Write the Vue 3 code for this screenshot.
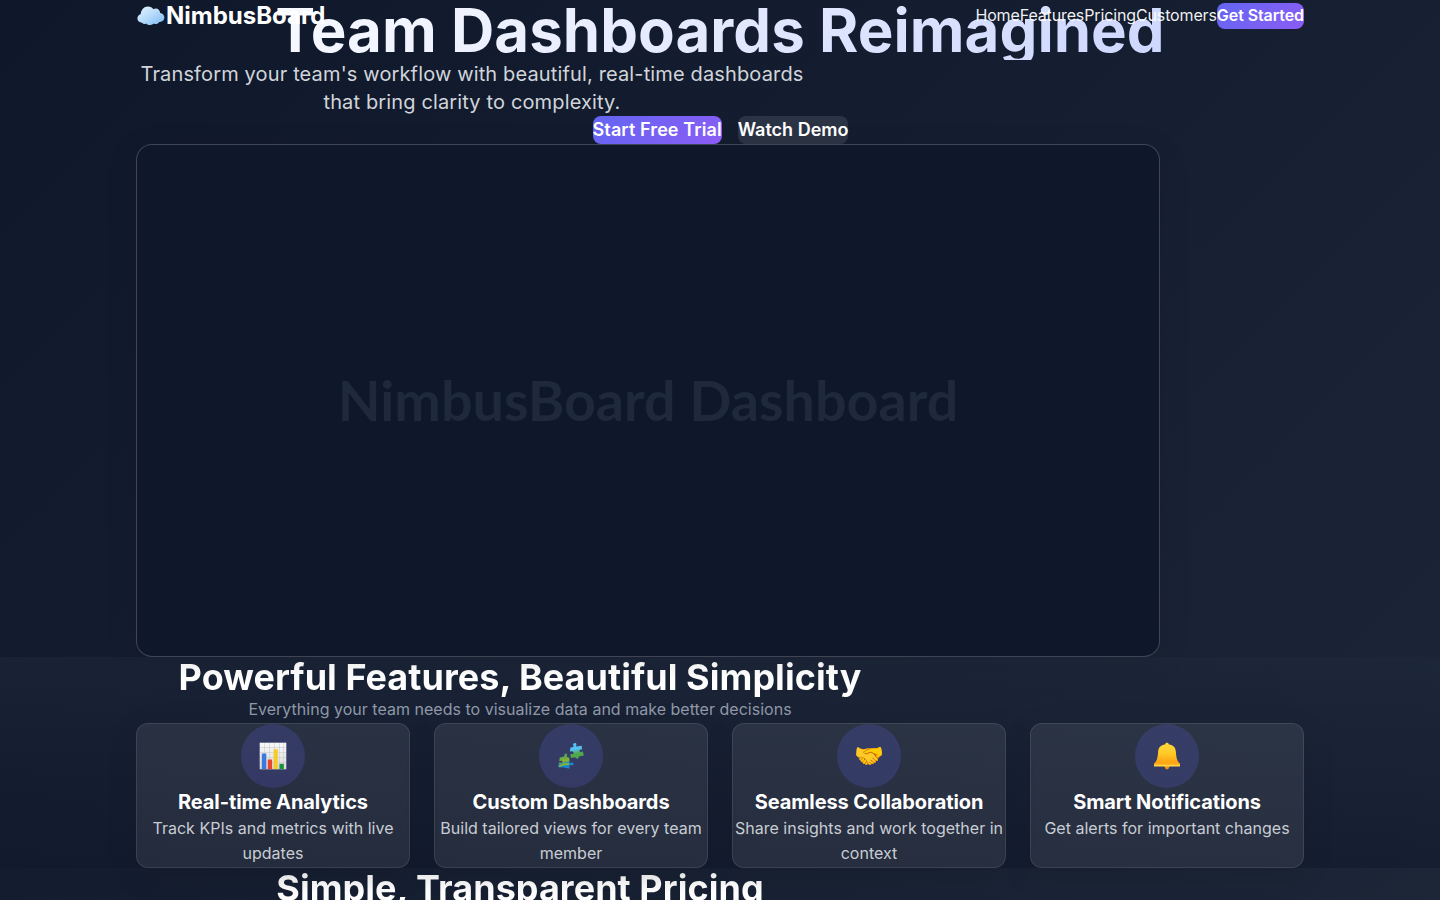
<script setup>
const links = ['Home', 'Features', 'Pricing', 'Customers']
const features = [
  { icon: 'chart', title: 'Real-time Analytics', text: 'Track KPIs and metrics with live updates' },
  { icon: 'puzzle', title: 'Custom Dashboards', text: 'Build tailored views for every team member' },
  { icon: 'hands', title: 'Seamless Collaboration', text: 'Share insights and work together in context' },
  { icon: 'bell', title: 'Smart Notifications', text: 'Get alerts for important changes' },
]
</script>

<template>
  <div class="page">
    <header class="nav">
      <div class="container nav-row">
        <div class="logo">
          <svg width="30" height="32" viewBox="0 0 30 32">
            <defs>
              <linearGradient id="cloud" x1="0" y1="0" x2="1" y2="1">
                <stop offset="0" stop-color="#e6f3fd" />
                <stop offset=".5" stop-color="#b5dafa" />
                <stop offset="1" stop-color="#7cb9f2" />
              </linearGradient>
            </defs>
            <path fill="url(#cloud)" d="M6 22.8C3.500 22.800 1.400 20.900 1.400 18.600C1.400 16.500 2.700 14.700 4.800 14.100C4.800 10 8 6.500 12 6.500C14.500 6.500 16.200 7.500 17.300 9.200C20.500 7.400 24 9.400 24.200 13C26.600 13.300 28.400 15.200 28.400 17.600C28.400 20.400 26 22.300 23.200 22C22 24 19.700 24.600 17.800 23.500C15.500 25.500 12 25.500 10.200 23.400C9 24.500 7.200 24.300 6 22.800Z" />
          </svg>
          <span>NimbusBoard</span>
        </div>
        <nav class="links">
          <a v-for="link in links" :key="link">{{ link }}</a>
          <button class="btn primary small">Get Started</button>
        </nav>
      </div>
    </header>

    <section class="hero">
      <div class="container">
        <h1>Team Dashboards Reimagined</h1>
        <p class="lead">Transform your team's workflow with beautiful, real-time dashboards that bring clarity to complexity.</p>
        <div class="actions">
          <button class="btn primary wide">Start Free Trial</button>
          <button class="btn ghost">Watch Demo</button>
        </div>
        <div class="preview"><span>NimbusBoard Dashboard</span></div>
      </div>
    </section>

    <section class="features">
      <div class="container">
        <div class="heading">
          <h2>Powerful Features, Beautiful Simplicity</h2>
          <p>Everything your team needs to visualize data and make better decisions</p>
        </div>
        <div class="grid">
          <article v-for="f in features" :key="f.title" class="card">
            <div class="icon">
              <svg v-if="f.icon === 'chart'" width="28" height="28" viewBox="0 0 28 28">
                <defs>
                  <linearGradient id="sheet" x1="0" y1="0" x2="0" y2="1">
                    <stop offset="0" stop-color="#fafafa" />
                    <stop offset="1" stop-color="#d9d9d9" />
                  </linearGradient>
                </defs>
                <rect x=".7" y=".7" width="26.600" height="26.600" fill="url(#sheet)" />
                <path d="M1 5.500H27M1 10.500H27M1 15.500H27M1 20.500H27M5.500 1V27M10.500 1V27M15.500 1V27M20.500 1V27M24.500 1V27" stroke="#c4c4c4" stroke-width=".5" />
                <rect x="2.800" y="11.500" width="4.500" height="15.600" fill="#3c78e0" />
                <rect x="8.800" y="17.500" width="4.300" height="9.600" fill="#e8432e" />
                <rect x="14.600" y="7.200" width="4.200" height="19.900" fill="#f5cb2c" />
                <rect x="20.500" y="21.800" width="4.300" height="5.300" fill="#17923f" />
              </svg>
              <svg v-else-if="f.icon === 'puzzle'" width="28" height="28" viewBox="0 0 28 28">
                <defs>
                  <linearGradient id="pieceA" x1="0" y1="0" x2=".2" y2="1">
                    <stop offset=".45" stop-color="#56c0f5" />
                    <stop offset=".75" stop-color="#4fa84a" />
                  </linearGradient>
                  <linearGradient id="pieceB" x1="0" y1="0" x2=".2" y2="1">
                    <stop offset="0" stop-color="#2f9a72" />
                    <stop offset=".55" stop-color="#8db52c" />
                    <stop offset=".72" stop-color="#1687d2" />
                  </linearGradient>
                </defs>
                <path fill="url(#pieceA)" d="M13.500 5.500L16.500 5C17 4.500 15.800 3.500 16.200 2C16.800 .6 19 .5 19.400 2C19.700 3.200 18.700 4 19.200 4.500L24.600 3.700L25.100 7.200C24.200 7.900 23 7.200 22.500 8.300C22.300 9.600 23.400 10.300 24.700 9.700L25.900 9.600L26.800 13.600L22 14.500C21.400 15.400 22 16.500 20.500 16.700C19.300 16.800 18.800 15.900 18 15.300L14 16L13.300 12.400C14.300 11.500 15.400 12.800 16.500 11.600C17.200 10.400 15.800 9 14.200 9.400L12.800 9.600Z" />
                <path fill="url(#pieceB)" d="M2.800 15.500L7 14.500C7.800 14 6.800 12.700 8 11.800C9.300 11.200 10.400 12 10.200 13.400C10.200 14 9.500 14.600 10 15L12.300 15.800L12.500 20.500C13.500 21.400 14.200 20.200 15.500 20.600C17 21.200 16.600 23.200 15.200 23.500C14.200 23.700 13.500 22.700 12.700 23.200L12.300 26.700L7.200 25.600L1.200 25.300L2 20.800C3 20.100 4 21.300 5.300 20.500C5.900 19.600 4.900 18.600 3.500 18.900L2.300 19Z" />
                <path d="M2 24.500L6 22.500L12 22" stroke="#8db52c" stroke-width="1.800" fill="none" />
              </svg>
              <svg v-else-if="f.icon === 'bell'" width="28" height="28" viewBox="0 0 28 28">
                <defs>
                  <linearGradient id="bell" x1="0" y1="0" x2="0" y2="1">
                    <stop offset="0" stop-color="#ffd93b" />
                    <stop offset=".45" stop-color="#ffca28" />
                    <stop offset=".8" stop-color="#ffa714" />
                  </linearGradient>
                </defs>
                <path fill="#f0920f" d="M11 23H17V24.500L16 25V26L15 27.300H13L12 26V25L11 24.500Z" />
                <path fill="url(#bell)" d="M12.300 2.200C12.500 .4 15.500 .4 15.700 2.200C20.500 3 22.600 5.500 22.900 10C23.200 16 24.500 20 27 21.500V24.300H1V21.500C3.500 20 4.800 16 5.100 10C5.400 5.500 7.500 3 12.300 2.200Z" />
                <path fill="#ffd54a" d="M1 22.700H27V24.400H1Z" />
              </svg>
              <span v-else class="hands">🤝</span>
            </div>
            <h3>{{ f.title }}</h3>
            <p>{{ f.text }}</p>
          </article>
        </div>
      </div>
    </section>

    <section class="container">
      <div class="heading"><h2>Simple, Transparent Pricing</h2></div>
    </section>
  </div>
</template>

<style>
body { margin: 0; background: #0f172a; overflow: hidden; }
</style>

<style scoped>
.page {
  height: 900px;
  overflow: hidden;
  background: linear-gradient(135deg, #0f172a 0%, #1c2637 100%);
  color: #fff;
  font-family: Inter, "Noto Color Emoji", sans-serif;
  font-size: 16px;
  line-height: 1.6;
}
svg { display: block; }
h1, h2, h3, p { margin: 0; }
.container { width: 1168px; margin: 0 auto; }
.nav { position: absolute; top: 0; left: 0; right: 0; z-index: 5; }
.nav-row { display: flex; justify-content: space-between; align-items: center; height: 32px; }
.logo { display: flex; font-size: 24px; line-height: 32px; font-weight: 700; }
.links { display: flex; align-items: center; color: rgba(255, 255, 255, .95); letter-spacing: -.13px; }
.btn {
  border: 0;
  padding: 0;
  border-radius: 8px;
  font: 600 18px/28px Inter, sans-serif;
  letter-spacing: 0;
  color: #fff;
}
.btn.small { font-size: 16px; line-height: 25.6px; letter-spacing: -.08px; }
.btn.wide { letter-spacing: .1px; }
.primary { background: linear-gradient(135deg, #6366f1, #8b5cf6); }
.ghost { background: rgba(255, 255, 255, .1); }
.hero { text-align: center; }
h1 {
  font-size: 60px;
  line-height: 60px;
  font-weight: 700;
  letter-spacing: .03px;
  background: linear-gradient(135deg, #fff, #c7d2fe);
  background-clip: text;
  -webkit-background-clip: text;
  color: transparent;
}
.lead {
  width: 672px;
  font-size: 20px;
  line-height: 28px;
  letter-spacing: .14px;
  color: #d1d5db;
}
.actions { display: flex; justify-content: center; gap: 16px; padding-left: 1px; }
.preview {
  box-sizing: border-box;
  width: 1024px;
  height: 513px;
  padding-bottom: 1px;
  display: flex;
  align-items: center;
  justify-content: center;
  border: 1px solid rgba(255, 255, 255, .2);
  border-radius: 16px;
  background: #0f172a;
  box-shadow: 0 8px 32px rgba(0, 0, 0, .1);
  color: #1e293b;
  font: 700 55.65px/1 Lato, sans-serif;
}
.features { background: linear-gradient(180deg, rgba(30, 41, 59, .5), rgba(15, 23, 42, .5)); }
.heading { width: 768px; text-align: center; }
h2 {
  font-size: 36px;
  line-height: 40px;
  font-weight: 700;
  letter-spacing: .03px;
  background: linear-gradient(180deg, #ececec, #fff 60%);
  background-clip: text;
  -webkit-background-clip: text;
  color: transparent;
}
.heading p { color: #9199a8; letter-spacing: .015px; }
.grid { display: grid; grid-template-columns: repeat(4, 1fr); gap: 24px; }
.card {
  border: 1px solid rgba(255, 255, 255, .1);
  border-radius: 12px;
  background: rgba(255, 255, 255, .08);
  box-shadow: 0 8px 32px rgba(0, 0, 0, .1);
  text-align: center;
}
.icon {
  width: 64px;
  height: 64px;
  margin: 0 auto;
  display: flex;
  align-items: center;
  justify-content: center;
  border-radius: 50%;
  background: rgba(99, 102, 241, .2);
  font-size: 24px;
}
.hands { padding-top: 2px; }
h3 { font-size: 20px; line-height: 28px; font-weight: 700; letter-spacing: -.1px; }
.card p { color: #c8ccd3; letter-spacing: .015px; }
</style>
